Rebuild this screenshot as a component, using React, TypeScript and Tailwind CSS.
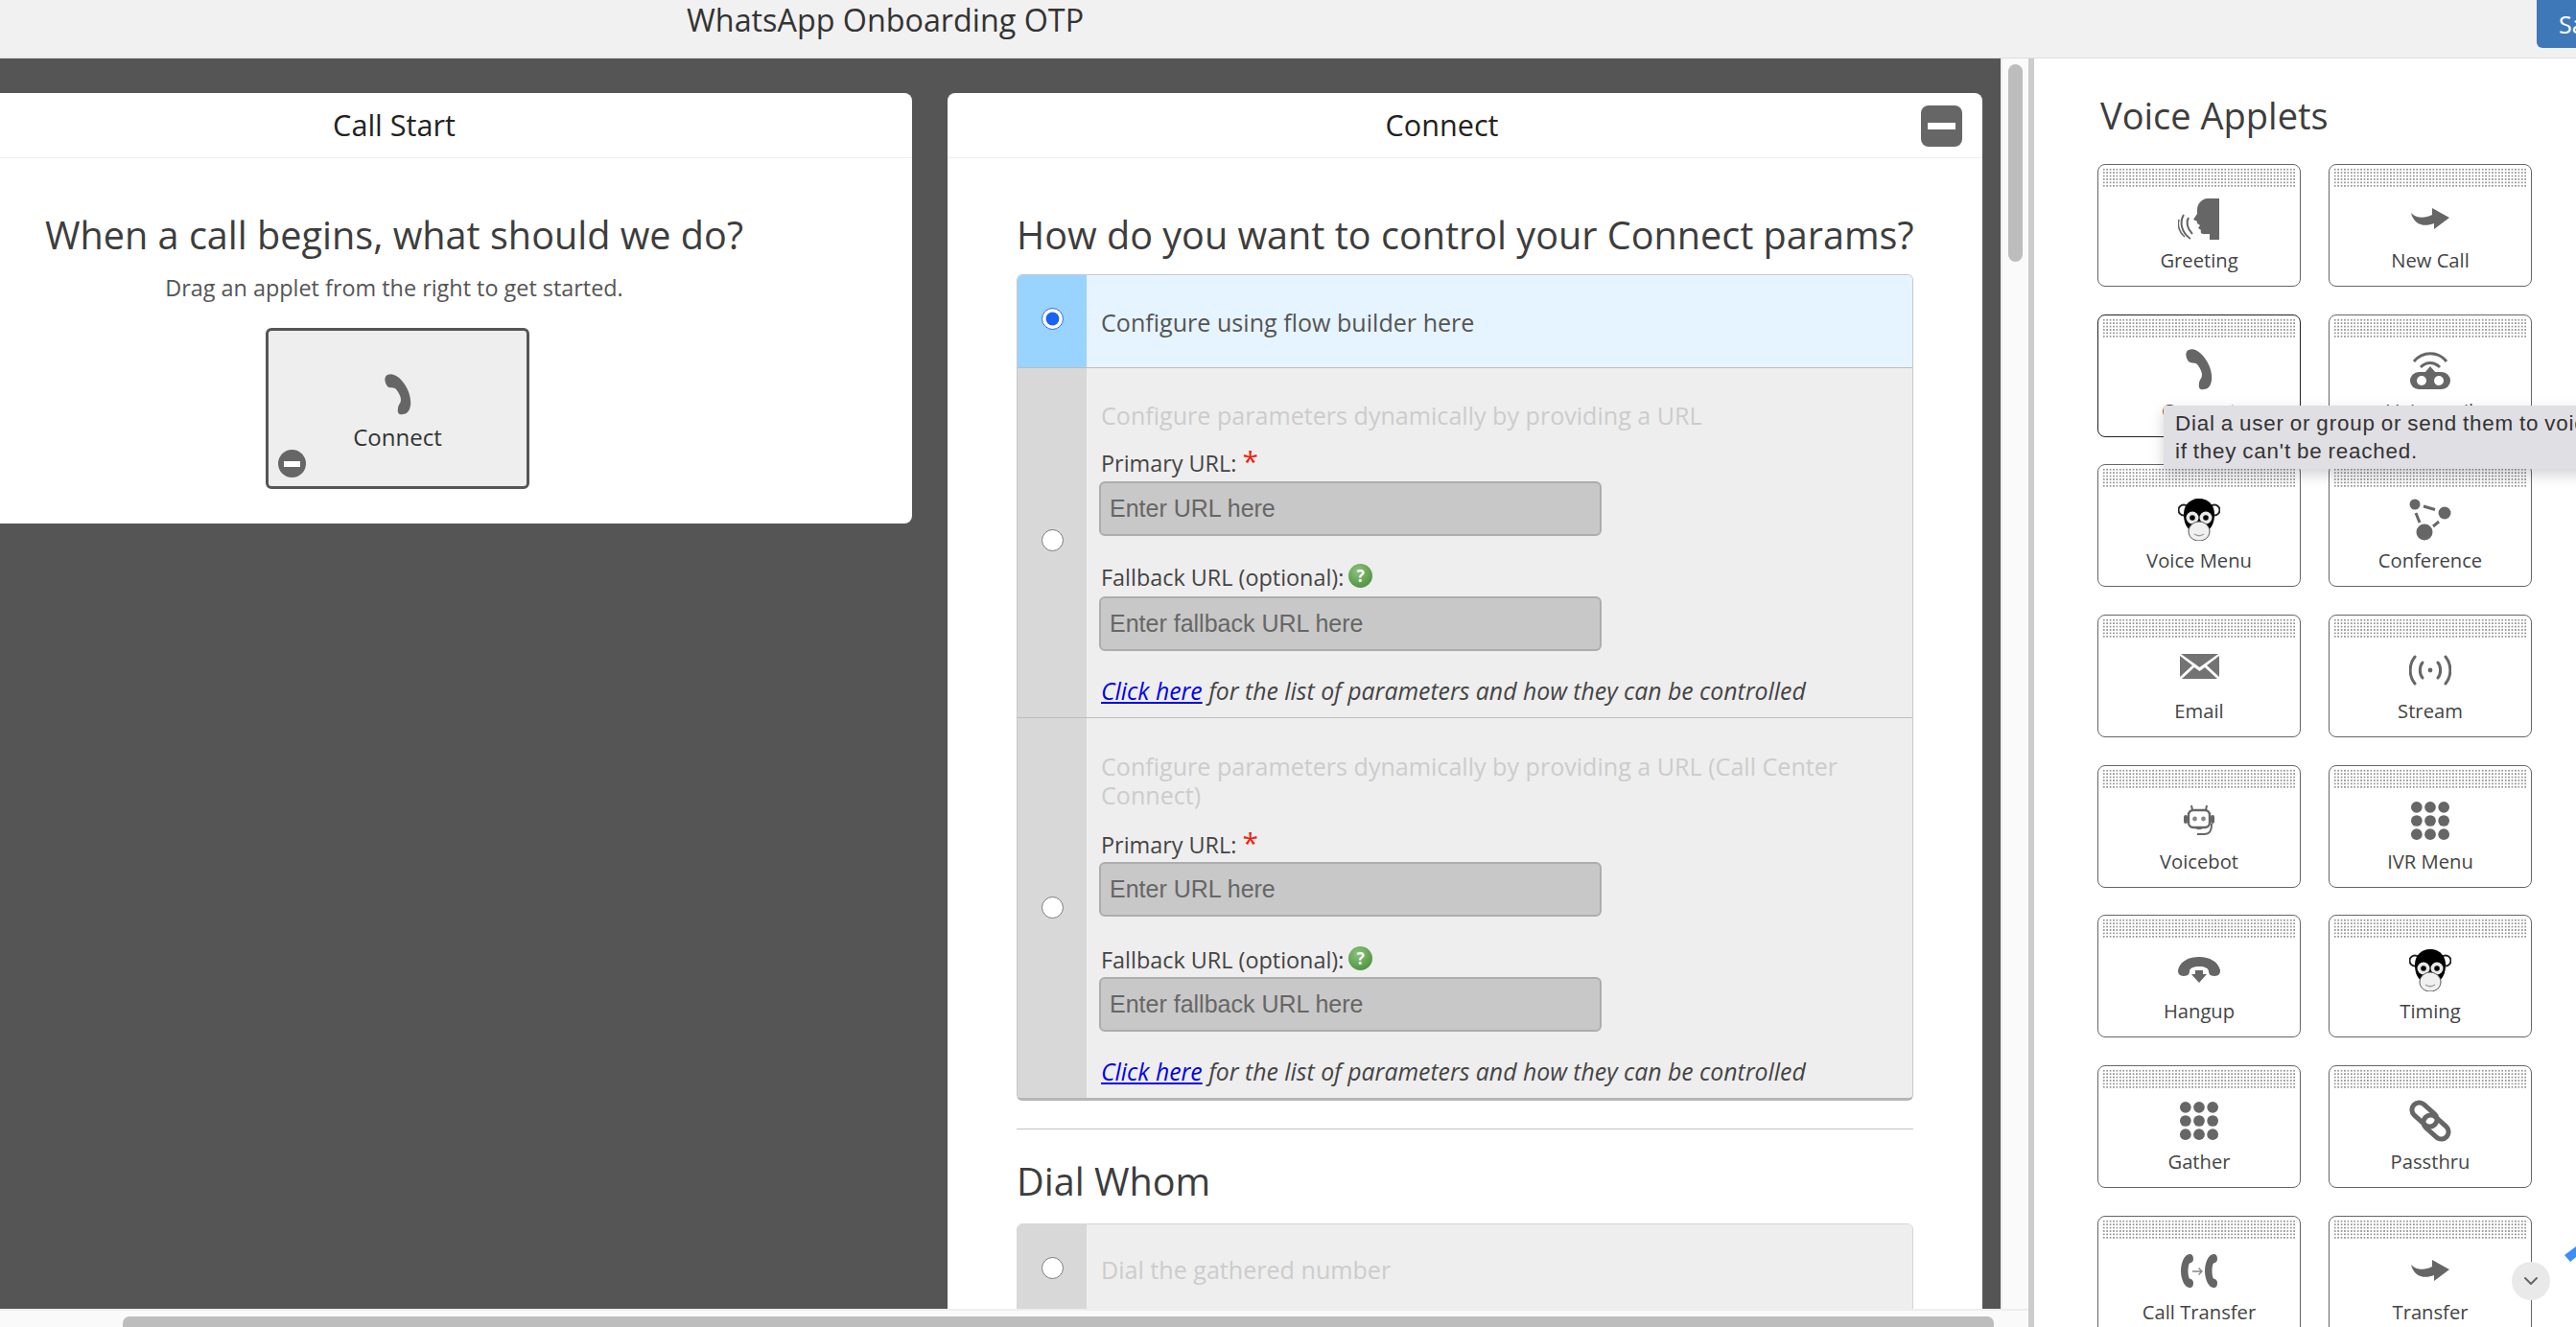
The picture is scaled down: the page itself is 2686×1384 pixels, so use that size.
import { ChevronDown } from "lucide-react";
import type { ReactNode } from "react";

const GREY = "#666666";

function ConnectIcon() {
  return (
    <svg width="30" height="44" viewBox="0 0 30 44" fill={GREY}>
      <path d="M4 1C8 -1 14 1 19 7C26 15 29 25 28 33C27 39 24 42 20 42C16 43 14 41 15 36C15 32 18 31 18 27C18 23 15 18 12 15C9 14 6 15 4 13C1 9 0 3 4 1Z" />
    </svg>
  );
}

function GreetingIcon() {
  return (
    <svg width="44" height="44" viewBox="0 0 44 44" fill={GREY}>
      <path d="M43 0L30 0C24 1 20 6 20 12L20 16L16 22L20 24L20 26L23 28L21 31L24 33C23 37 25 37 29 37L33 37L33 43L43 43Z" />
      <g fill="none" stroke={GREY} strokeWidth="2">
        <path d="M11 20C8 25 10 32 15 37" />
        <path d="M6 17C1 25 4 36 13 42" />
        <path d="M1 22C-1 29 2 36 7 40" strokeWidth="1.5" />
      </g>
    </svg>
  );
}

function ArrowIcon() {
  return (
    <svg width="40" height="24" viewBox="0 0 40 24" fill={GREY}>
      <path d="M22 0L40 10L24 22L24 16C14 20 3 18 0 5C6 11 14 11 22 7Z" />
    </svg>
  );
}

function VoicemailIcon() {
  return (
    <svg width="44" height="42" viewBox="0 0 44 42" fill={GREY}>
      <g fill="none" stroke={GREY} strokeWidth="3">
        <path d="M5 12C14 1 30 1 39 12" />
        <path d="M12 18C18 12 26 12 32 18" />
      </g>
      <path d="M22 17L28 24L16 24Z" />
      <rect x="1" y="23" width="42" height="18" rx="9" />
      <circle cx="13" cy="32" r="5" fill="#fff" />
      <circle cx="31" cy="32" r="5" fill="#fff" />
    </svg>
  );
}

function MonkeyIcon() {
  return (
    <svg width="44" height="44" viewBox="0 0 44 44">
      <circle cx="6" cy="12" r="5.5" fill="#fff" stroke="#222" strokeWidth="2" />
      <circle cx="38" cy="12" r="5.5" fill="#fff" stroke="#222" strokeWidth="2" />
      <path d="M22 0C32 0 38 7 38 16C38 24 36 30 30 34L14 34C8 30 6 24 6 16C6 7 12 0 22 0Z" fill="#000" />
      <circle cx="15" cy="20" r="6.5" fill="#e8e8e8" />
      <circle cx="29" cy="20" r="6.5" fill="#e8e8e8" />
      <circle cx="15" cy="20" r="2.8" fill="#000" />
      <circle cx="29" cy="20" r="2.8" fill="#000" />
      <path d="M22 24C27 24 33 28 33 34C33 40 28 44 22 44C16 44 11 40 11 34C11 28 17 24 22 24Z" fill="#f0f0f0" stroke="#555" strokeWidth="1" />
      <path d="M17 37C20 39 24 39 27 37" fill="none" stroke="#999" strokeWidth="1.5" />
    </svg>
  );
}

function ConferenceIcon() {
  return (
    <svg width="44" height="44" viewBox="0 0 44 44" fill={GREY}>
      <circle cx="6" cy="6" r="5.5" />
      <circle cx="37" cy="15" r="6.5" />
      <circle cx="16" cy="35" r="8.5" />
      <g stroke={GREY} strokeWidth="3">
        <path d="M15 8L27 11.5" />
        <path d="M7 15L11 25" />
        <path d="M25 29L31 24" />
      </g>
    </svg>
  );
}

function EmailIcon() {
  return (
    <svg className="mb-[10px]" width="41" height="27" viewBox="0 0 41 27" fill="#737373">
      <path d="M1 1L40 1L20.5 15Z" />
      <path d="M0 3L0 25L13 13Z" />
      <path d="M41 3L41 25L28 13Z" />
      <path d="M15 15L20.5 19L26 15L39 27L2 27Z" />
    </svg>
  );
}

function StreamIcon() {
  return (
    <svg width="44" height="32" viewBox="0 0 44 32" fill="none" stroke={GREY} strokeWidth="3" strokeLinecap="round">
      <path d="M6 2C-0.5 10 -0.5 22 6 30" />
      <path d="M38 2C44.5 10 44.5 22 38 30" />
      <path d="M14 8C10.5 12 10.5 20 14 24" />
      <path d="M30 8C33.5 12 33.5 20 30 24" />
      <circle cx="22" cy="16" r="2.4" fill={GREY} stroke="none" />
    </svg>
  );
}

function VoicebotIcon() {
  return (
    <svg width="32" height="33" viewBox="0 0 32 33">
      <path d="M9 6L8 1M23 6L24 1" stroke={GREY} strokeWidth="2" />
      <rect x="5" y="6" width="22" height="18" rx="5" fill="#fff" stroke={GREY} strokeWidth="2.4" />
      <circle cx="11.5" cy="15" r="2.4" fill="#888" />
      <circle cx="20.5" cy="15" r="2.4" fill="#888" />
      <rect x="0" y="11" width="4" height="9" rx="2" fill={GREY} />
      <rect x="28" y="11" width="4" height="9" rx="2" fill={GREY} />
      <path d="M12 24C13 27 19 27 20 24Z" fill={GREY} />
      <path d="M29 20C29 28 27 31 21 31L14 31" fill="none" stroke={GREY} strokeWidth="2" />
    </svg>
  );
}

function DotsIcon() {
  const spots = [7, 21.5, 36];
  return (
    <svg width="42" height="42" viewBox="0 0 43 43" fill={GREY}>
      {spots.flatMap((y) => spots.map((x) => <circle key={`${x}-${y}`} cx={x} cy={y} r="6" />))}
    </svg>
  );
}

function HangupIcon() {
  return (
    <svg width="44" height="28" viewBox="0 0 44 28" fill={GREY}>
      <path d="M0 14C2 5 11 0 22 0C33 0 42 5 44 14C44 18 42 20 38 20C34 20 32 18 32 15C32 12 28 10 22 10C16 10 12 12 12 15C12 18 10 20 6 20C2 20 0 18 0 14Z" />
      <path d="M18 14L26 14L26 18L30 18L22 27L14 18L18 18Z" />
    </svg>
  );
}

function ChainIcon() {
  return (
    <svg width="44" height="44" viewBox="0 0 44 44" fill="none" stroke={GREY} strokeWidth="5">
      <rect x="1" y="8" width="30" height="15" rx="7.5" transform="rotate(42 16 15.5)" />
      <rect x="13" y="21" width="30" height="15" rx="7.5" transform="rotate(42 28 28.5)" />
    </svg>
  );
}

function CallTransferIcon() {
  const handset =
    "M9 0C12 0 13 2 13 5C13 8 11 9 9 9.5C7 12 7 23 9 25.5C11 26 13 27 13 30C13 33 12 35 9 35C4 35 0 26 0 17.5C0 9 4 0 9 0Z";
  return (
    <svg width="38" height="36" viewBox="0 0 38 36">
      <path d={handset} fill={GREY} />
      <path d={handset} fill={GREY} transform="translate(25 0)" />
      <path d="M12 18L22 18M18.5 14.5L22 18L18.5 21.5" fill="none" stroke="#888" strokeWidth="1.4" />
    </svg>
  );
}

const applets: { label: string; icon: ReactNode; selected?: boolean }[] = [
  { label: "Greeting", icon: <GreetingIcon /> },
  { label: "New Call", icon: <ArrowIcon /> },
  { label: "Connect", icon: <ConnectIcon />, selected: true },
  { label: "Voicemail", icon: <VoicemailIcon /> },
  { label: "Voice Menu", icon: <MonkeyIcon /> },
  { label: "Conference", icon: <ConferenceIcon /> },
  { label: "Email", icon: <EmailIcon /> },
  { label: "Stream", icon: <StreamIcon /> },
  { label: "Voicebot", icon: <VoicebotIcon /> },
  { label: "IVR Menu", icon: <DotsIcon /> },
  { label: "Hangup", icon: <HangupIcon /> },
  { label: "Timing", icon: <MonkeyIcon /> },
  { label: "Gather", icon: <DotsIcon /> },
  { label: "Passthru", icon: <ChainIcon /> },
  { label: "Call Transfer", icon: <CallTransferIcon /> },
  { label: "Transfer", icon: <ArrowIcon /> },
];

function AppletCard({ label, icon, selected }: { label: string; icon: ReactNode; selected?: boolean }) {
  return (
    <div
      className={`flex h-[128px] flex-col items-center rounded-[8px] border-[1.5px] bg-white px-[4px] pt-[3px] ${
        selected ? "border-[#222]" : "border-[#666]"
      }`}
    >
      <div className="h-[20px] w-full shrink-0 bg-[radial-gradient(circle,#949494_1px,transparent_1.3px)] bg-[length:3.43px_3.43px]" />
      <div className="flex h-[44px] mt-[12px] shrink-0 items-center justify-center">{icon}</div>
      <div className="mt-[5px] text-[20.2px] leading-[30px] text-[#444]">{label}</div>
    </div>
  );
}

function CardHeader({ title, className }: { title: string; className?: string }) {
  return (
    <div className={`flex h-[68px] items-center justify-center border-b border-[#eeeeee] text-[30.6px] text-[#222] ${className ?? ""}`}>
      {title}
    </div>
  );
}

function Radio({ checked }: { checked?: boolean }) {
  return (
    <input
      type="radio"
      readOnly
      checked={!!checked}
      className="m-0 h-[23px] w-[23px] accent-[#1a62f2]"
    />
  );
}

function OptionRow({
  radioTone,
  rowTone,
  checked,
  children,
  className,
}: {
  radioTone: string;
  rowTone: string;
  checked?: boolean;
  children: ReactNode;
  className?: string;
}) {
  return (
    <div className={`flex ${rowTone} ${className ?? ""}`}>
      <div className={`flex w-[72px] shrink-0 items-center justify-center ${radioTone}`}>
        <Radio checked={checked} />
      </div>
      <div className="min-w-0 flex-1 pl-[15px] pr-[16px] text-[25.1px] leading-[30px]">{children}</div>
    </div>
  );
}

function UrlField({ placeholder, className }: { placeholder: string; className: string }) {
  return (
    <input
      readOnly
      placeholder={placeholder}
      className={`ml-[-2px] block h-[57px] w-[524px] rounded-[6px] border-2 border-[#adadad] bg-[#c8c8c8] px-[9px] font-['Liberation_Sans',sans-serif] text-[25px] outline-none placeholder:text-[#666] ${className}`}
    />
  );
}

function PrimaryLabel() {
  return (
    <div className="text-[23.4px] text-[#444]">
      Primary URL: <span className="relative top-0 text-[30px] leading-[20px] text-[#f01c0c]">*</span>
    </div>
  );
}

function FallbackLabel() {
  return (
    <div className="flex items-start text-[23.4px] text-[#444]">
      Fallback URL (optional):
      <span className="ml-[5px] mt-[1px] flex h-[25px] w-[25px] items-center justify-center rounded-full bg-[radial-gradient(circle_at_40%_30%,#8cc47a,#3f8534)] text-[17px] font-bold leading-none text-white">
        ?
      </span>
    </div>
  );
}

function ClickHere() {
  return (
    <div className="whitespace-nowrap text-[24.8px] italic text-[#444]">
      <span className="text-[#0000ee] underline">Click here</span> for the list of parameters and how they can be controlled
    </div>
  );
}

function RemoveBadge() {
  return (
    <div className="absolute left-[10px] top-[124px] flex h-[29px] w-[29px] items-center justify-center rounded-full bg-[#666]">
      <div className="h-[6px] w-[17px] bg-white" />
    </div>
  );
}

function CallStartCard() {
  return (
    <section className="ml-[-129px] w-[1080px] shrink-0 rounded-[8px] bg-white pb-[36px]">
      <CardHeader title="Call Start" />
      <h2 className="mt-[51.5px] text-center text-[39.6px] font-normal leading-[56px] text-[#3d3d3d]">When a call begins, what should we do?</h2>
      <p className="mt-[12px] text-center text-[23.4px] leading-[30px] text-[#555]">Drag an applet from the right to get started.</p>
      <div className="relative ml-[406px] mt-[27.5px] flex h-[168px] w-[275px] flex-col items-center rounded-[6px] border-[3px] border-[#555] bg-[#eeeeee] pt-[45px] text-[24px] text-[#333]">
        <ConnectIcon />
        <div className="mt-[4px] leading-[36px]">Connect</div>
        <RemoveBadge />
      </div>
    </section>
  );
}

function ConnectCard() {
  return (
    <section className="relative w-[1079px] shrink-0 rounded-[8px] bg-white pb-[40px]">
      <CardHeader title="Connect" className="pr-[48px]" />
      <div className="absolute right-[21px] top-[13px] flex h-[43px] w-[43px] items-center justify-center rounded-[8px] bg-[#666]">
        <div className="h-[7px] w-[29px] bg-white" />
      </div>
      <div className="px-[72px] pt-[51.5px]">
        <h2 className="whitespace-nowrap text-[39.6px] font-normal leading-[56px] text-[#3d3d3d]">How do you want to control your Connect params?</h2>
        <div className="mt-[13.5px] overflow-hidden rounded-[6px] border border-[#c8c8c8] border-b-[3px] border-b-[#b5b5b5]">
          <OptionRow radioTone="bg-[#99d3ff] pb-[6px]" rowTone="bg-[#e6f4ff] text-[#555]" checked className="h-[97px] border-b border-[#bdbdbd]">
            <div className="pt-[34px]">Configure using flow builder here</div>
          </OptionRow>
          <OptionRow radioTone="bg-[#d8d8d8] pb-[6px]" rowTone="bg-[#eeeeee]" className="h-[365px] border-b border-[#bdbdbd]">
            <div className="pt-[34px] text-[#cccccc]">Configure parameters dynamically by providing a URL</div>
            <div className="mt-[20px]">
              <PrimaryLabel />
            </div>
            <UrlField placeholder="Enter URL here" className="mt-[4px]" />
            <div className="mt-[28px]">
              <FallbackLabel />
            </div>
            <UrlField placeholder="Enter fallback URL here" className="mt-[5px]" />
            <div className="mt-[26px]">
              <ClickHere />
            </div>
          </OptionRow>
          <OptionRow radioTone="bg-[#d8d8d8] pb-[2px]" rowTone="bg-[#eeeeee]" className="h-[396px]">
            <div className="pt-[35px] text-[#cccccc]">Configure parameters dynamically by providing a URL (Call Center Connect)</div>
            <div className="mt-[22px]">
              <PrimaryLabel />
            </div>
            <UrlField placeholder="Enter URL here" className="mt-[3px]" />
            <div className="mt-[30px]">
              <FallbackLabel />
            </div>
            <UrlField placeholder="Enter fallback URL here" className="mt-[3px]" />
            <div className="mt-[26px]">
              <ClickHere />
            </div>
          </OptionRow>
        </div>
        <hr className="mt-[29px] border-t-[1.5px] border-[#c4c4c4]" />
        <h2 className="mt-[26px] text-[39.6px] font-normal leading-[56px] text-[#3d3d3d]">Dial Whom</h2>
        <div className="mt-[16px] overflow-hidden rounded-t-[6px] border border-[#d6d6d6]">
          <OptionRow radioTone="bg-[#d8d8d8] pb-[8px]" rowTone="bg-[#eeeeee]" className="h-[98px] text-[#cccccc]">
            <div className="pt-[32px]">Dial the gathered number</div>
          </OptionRow>
        </div>
      </div>
    </section>
  );
}

function AppletsPanel() {
  return (
    <aside className="relative min-w-0 flex-1 overflow-hidden bg-white pl-[66px]">
      <h2 className="pl-[3px] pt-[35px] text-[38px] font-normal leading-[48px] text-[#3d3d3d]">Voice Applets</h2>
      <div className="mt-[27px] grid w-[453px] grid-cols-[212px_212px] gap-x-[29px] gap-y-[28.7px]">
        {applets.map((a) => (
          <AppletCard key={a.label} {...a} />
        ))}
      </div>

      {/* hover tooltip on the Connect applet */}
      <div className="absolute left-[135px] top-[362px] h-[66px] w-[500px] overflow-hidden bg-[#e0dfe3] pl-[12px] pt-[5px] font-['Liberation_Sans',sans-serif] text-[22.4px] leading-[28.5px] tracking-[0.8px] text-[#333] [word-spacing:-1px] shadow-[0_6px_14px_rgba(0,0,0,0.18)]">
        <div className="whitespace-nowrap">Dial a user or group or send them to voicemail</div>
        <div className="whitespace-nowrap">if they can't be reached.</div>
      </div>

      <button className="absolute left-[498px] top-[1255px] flex h-[40px] w-[40px] items-center justify-center rounded-full bg-[#e9e9e9] text-[#666]">
        <ChevronDown size={24} strokeWidth={2} />
      </button>
      <svg className="absolute right-0 top-[1239px]" width="12" height="16" viewBox="0 0 12 16">
        <polygon points="12,0 0,9 6,16 12,11" fill="#3b8ef5" />
      </svg>
    </aside>
  );
}

export default function App() {
  return (
    <div className="flex h-screen w-full flex-col overflow-hidden bg-white font-['Open_Sans',sans-serif]">
      <header className="flex h-[61px] shrink-0 items-start justify-between border-b border-[#dddddd] bg-[#f1f1f1] pl-[716px]">
        <div className="text-[32.3px] leading-[40px] text-[#333]">WhatsApp Onboarding OTP</div>
        <button className="h-[50px] w-[41px] overflow-hidden rounded-bl-[6px] bg-[#3f78b9] pl-[23px] text-left text-[25px] leading-[44px] text-white">
          Save
        </button>
      </header>

      <div className="flex min-h-0 flex-1">
        <div className="flex w-[2115px] shrink-0 flex-col">
          <div className="flex min-h-0 flex-1">
            <main className="flex w-[2086px] shrink-0 items-start gap-[37px] overflow-hidden bg-[#555555] pt-[36px]">
              <CallStartCard />
              <ConnectCard />
            </main>
            <div className="flex-1 border-l-2 border-[#eeeeee] bg-[#fafafa] pl-[6px] pt-[6px]">
              <div className="h-[206px] w-[15px] rounded-[8px] bg-[#bdbdbd]" />
            </div>
          </div>
          <div className="h-[19px] shrink-0 border-t-2 border-[#eeeeee] bg-[#fafafa] pl-[128px] pt-[6px]">
            <div className="h-[11px] w-[1951px] rounded-t-[7px] bg-[#bdbdbd]" />
          </div>
        </div>
        <div className="w-[6px] shrink-0 bg-[#cccccc]" />
        <AppletsPanel />
      </div>
    </div>
  );
}
